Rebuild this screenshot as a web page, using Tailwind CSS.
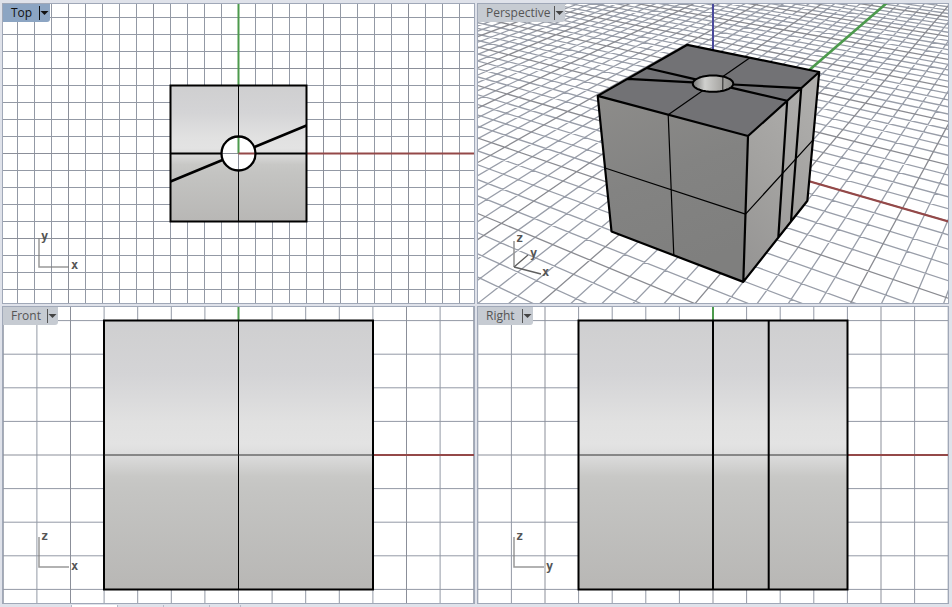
<!DOCTYPE html>
<html lang="en">
<head>
    <meta charset="UTF-8">
    <meta name="viewport" content="width=device-width, initial-scale=1.0">
    <title>Four View Layout</title>
    <script src="https://cdn.jsdelivr.net/npm/@tailwindcss/browser@4"></script>
</head>
<body class="h-screen flex flex-col overflow-hidden bg-[#dfe2ea] font-['Open_Sans',sans-serif]">
    <main class="flex-1 min-h-0 grid grid-cols-[473fr_472fr] grid-rows-[301fr_298fr] gap-[2px] pt-[3px] pl-[2px] pr-[3px]">

        <!-- Top -->
        <section class="relative overflow-hidden border border-[#a0a8b8] bg-white" aria-label="Top viewport">
            <svg class="block absolute inset-0 w-full h-full">
                <defs>
                    <linearGradient id="shade" x1="0" y1="0" x2="0" y2="1">
                        <stop offset="0" stop-color="#cfcfd0"/>
                        <stop offset="0.2" stop-color="#d4d4d6"/>
                        <stop offset="0.38" stop-color="#e1e1e1"/>
                        <stop offset="0.46" stop-color="#e3e3e3"/>
                        <stop offset="0.5" stop-color="#dcdcdc"/>
                        <stop offset="0.58" stop-color="#c8c8c6"/>
                        <stop offset="0.64" stop-color="#c4c4c2"/>
                        <stop offset="1" stop-color="#b8b7b5"/>
                    </linearGradient>
                </defs>
                <svg x="50%" y="50%" class="overflow-visible">
                    <g id="grid-top"></g>
                    <path d="M0 0V-600" stroke="#4c9a4c" stroke-width="2"/>
                    <path d="M0 0H900" stroke="#944848" stroke-width="2"/>
                    <path d="M-68-68H68V68H-68ZM17 0A17 17 0 1 0-17 0A17 17 0 1 0 17 0Z" fill="url(#shade)" fill-rule="evenodd"/>
                    <path d="M0-68V-17M0 17V68" stroke="#000"/>
                    <path d="M-68-68H68V68H-68ZM-68 0H-17M17 0H68" fill="none" stroke="#000" stroke-width="2"/>
                    <path d="M-68 28L-16 6.5M16-6.5L68-28" stroke="#000" stroke-width="2.5"/>
                    <circle r="17" fill="none" stroke="#000" stroke-width="2.3"/>
                </svg>
                <svg y="100%" class="overflow-visible font-['DejaVu_Sans_Mono',monospace] font-bold text-xs" fill="#555">
                    <path d="M36-65V-36H66" fill="none" stroke="#808080" stroke-opacity=".8" stroke-width="1.5"/>
                    <text x="38" y="-63">y</text>
                    <text x="68" y="-34">x</text>
                </svg>
            </svg>
            <div class="absolute top-0 left-0 flex h-[18px] rounded-br-[3px] bg-[#8ca5c3] text-xs leading-[18px] text-[#111]">
                <button class="w-9 pl-2 text-left">Top</button>
                <button class="w-[11px] flex items-center" aria-label="Top menu">
                    <svg width="11" height="18"><path d="M.5 2V16" stroke="#111"/><path d="M1.500 7H9.500L5.500 11Z" fill="#111"/></svg>
                </button>
            </div>
        </section>

        <!-- Perspective -->
        <section class="relative overflow-hidden border border-[#a0a8b8] bg-white" aria-label="Perspective viewport">
            <svg class="block absolute inset-0 w-full h-full">
                <defs>
                    <linearGradient id="wall" x1="0" y1="0" x2="1" y2="0">
                        <stop offset="0" stop-color="#777"/>
                        <stop offset="0.3" stop-color="#d0d0ce"/>
                        <stop offset="0.65" stop-color="#aeadaa"/>
                        <stop offset="1" stop-color="#8a8a88"/>
                    </linearGradient>
                    <linearGradient id="front-face" x1="0" y1="0" x2="0.3" y2="1">
                        <stop offset="0" stop-color="#8d8c8a"/>
                        <stop offset="0.5" stop-color="#838382"/>
                        <stop offset="1" stop-color="#7f7f7e"/>
                    </linearGradient>
                    <linearGradient id="right-face" x1="0.6" y1="0" x2="0.2" y2="1">
                        <stop offset="0" stop-color="#aeadab"/>
                        <stop offset="0.5" stop-color="#a3a2a0"/>
                        <stop offset="1" stop-color="#969594"/>
                    </linearGradient>
                </defs>
                <svg x="50%" y="50%" class="overflow-visible" id="scene"></svg>
                <svg y="100%" class="overflow-visible font-['DejaVu_Sans_Mono',monospace] font-bold text-xs" fill="#555">
                    <path d="M36-62V-36" stroke="#909090" stroke-width="1.5"/>
                    <path d="M36-36L50-48M36-36L63-29" stroke="#606060" stroke-width="1.3"/>
                    <text x="38" y="-61">z</text>
                    <text x="52" y="-46">y</text>
                    <text x="64" y="-27">x</text>
                </svg>
            </svg>
            <div class="absolute top-0 left-0 flex h-[18px] rounded-br-[3px] bg-[#c6cbd2] text-xs leading-[18px] text-[#555]">
                <button class="w-[76px] pl-2 text-left">Perspective</button>
                <button class="w-[11px] flex items-center" aria-label="Perspective menu">
                    <svg width="11" height="18"><path d="M.5 2V16" stroke="#555"/><path d="M1.500 7H9.500L5.500 11Z" fill="#444"/></svg>
                </button>
            </div>
        </section>

        <!-- Front -->
        <section class="relative overflow-hidden border border-[#a0a8b8] bg-white" aria-label="Front viewport">
            <svg class="block absolute inset-0 w-full h-full">
                <svg x="50%" y="50%" class="overflow-visible">
                    <g id="grid-front"></g>
                    <path d="M0 0V-600" stroke="#4c9a4c" stroke-width="2"/>
                    <path d="M0 0H900" stroke="#944848" stroke-width="2"/>
                    <rect x="-134.5" y="-134.5" width="269" height="269" fill="url(#shade)" stroke="#000" stroke-width="2"/>
                    <path d="M0-134V134" stroke="#000"/>
                    <path d="M-134 0H134" stroke="#333" stroke-width="1.2"/>
                </svg>
                <svg y="100%" class="overflow-visible font-['DejaVu_Sans_Mono',monospace] font-bold text-xs" fill="#555">
                    <path d="M36-66V-36H66" fill="none" stroke="#808080" stroke-opacity=".8" stroke-width="1.5"/>
                    <text x="38" y="-63">z</text>
                    <text x="68" y="-33">x</text>
                </svg>
            </svg>
            <div class="absolute top-0 left-0 flex h-[18px] rounded-br-[3px] bg-[#c6cbd2] text-xs leading-[18px] text-[#555]">
                <button class="w-11 pl-2 text-left">Front</button>
                <button class="w-[11px] flex items-center" aria-label="Front menu">
                    <svg width="11" height="18"><path d="M.5 2V16" stroke="#555"/><path d="M1.500 7H9.500L5.500 11Z" fill="#444"/></svg>
                </button>
            </div>
        </section>

        <!-- Right -->
        <section class="relative overflow-hidden border border-[#a0a8b8] bg-white" aria-label="Right viewport">
            <svg class="block absolute inset-0 w-full h-full">
                <svg x="50%" y="50%" class="overflow-visible">
                    <g id="grid-right"></g>
                    <path d="M0 0V-600" stroke="#4c9a4c" stroke-width="2"/>
                    <path d="M0 0H900" stroke="#944848" stroke-width="2"/>
                    <rect x="-134.5" y="-134.5" width="269" height="269" fill="url(#shade)" stroke="#000" stroke-width="2"/>
                    <path d="M-134 0H134" stroke="#333" stroke-width="1.2"/>
                    <path d="M0-134V134M55.700-134V134" stroke="#000" stroke-width="2"/>
                </svg>
                <svg y="100%" class="overflow-visible font-['DejaVu_Sans_Mono',monospace] font-bold text-xs" fill="#555">
                    <path d="M36-66V-36H66" fill="none" stroke="#808080" stroke-opacity=".8" stroke-width="1.5"/>
                    <text x="38" y="-63">z</text>
                    <text x="68" y="-33">y</text>
                </svg>
            </svg>
            <div class="absolute top-0 left-0 flex h-[18px] rounded-br-[3px] bg-[#c6cbd2] text-xs leading-[18px] text-[#555]">
                <button class="w-11 pl-2 text-left">Right</button>
                <button class="w-[11px] flex items-center" aria-label="Right menu">
                    <svg width="11" height="18"><path d="M.5 2V16" stroke="#555"/><path d="M1.500 7H9.500L5.500 11Z" fill="#444"/></svg>
                </button>
            </div>
        </section>
    </main>

    <!-- Upper edge of the viewport tabs -->
    <footer class="h-[3px] pt-px flex pl-[24px]">
        <div class="w-12 border-r border-[#b4bac8]"></div>
        <div class="w-[46px] border-r border-[#b4bac8] bg-white"></div>
        <div class="w-[46px] border-r border-[#b4bac8]"></div>
        <div class="w-[46px] border-r border-[#b4bac8]"></div>
        <div class="w-[31px] border-r border-[#b4bac8]"></div>
    </footer>

    <script>
        const GRID = '#9399a5';
        const MAJOR = '#8b8f99';

        // Flat grid for the parallel views
        function flatGrid(id, step) {
            let minor = '', major = '';
            for (let i = -60; i <= 60; i++) {
                const p = (i * step).toFixed(1);
                const d = `M${p}-1500V1500M-1500 ${p}H1500`;
                if (i % 5 === 0) major += d; else minor += d;
            }
            document.getElementById(id).innerHTML =
                `<path d="${minor}" stroke="${GRID}"/><path d="${major}" stroke="${MAJOR}"/>`;
        }
        flatGrid('grid-top', 17);
        flatGrid('grid-front', 33.6);
        flatGrid('grid-right', 33.6);

        // Camera looks at the origin from azimuth -60, elevation 30
        const FOCAL = 624, DIST = 32.85;
        const C = Math.cos(Math.PI / 6);
        const depth = ([x, y, z]) => DIST - (x * C / 2 - y * C * C + z / 2);
        function project(p) {
            const [x, y, z] = p;
            const s = FOCAL / depth(p);
            return [(s * (x * C + y / 2)).toFixed(1), (-s * (-x / 4 + y * C / 2 + z * C)).toFixed(1)];
        }
        const poly = pts => 'M' + pts.map(p => project(p).join(' ')).join('L');

        // Segment with the part behind the camera cut away
        function segment(a, b) {
            const near = 4, da = depth(a), db = depth(b);
            if (da < near && db < near) return '';
            const mix = t => a.map((v, i) => v + (b[i] - v) * t);
            const t = (near - da) / (db - da);
            if (da < near) a = mix(t);
            else if (db < near) b = mix(t);
            return poly([a, b]);
        }

        let minor = '', major = '';
        const N = 100;
        for (let i = -N; i <= N; i++) {
            const d = segment([i, -N, 0], [i, N, 0]) + segment([-N, i, 0], [N, i, 0]);
            if (i % 5 === 0) major += d; else minor += d;
        }

        const ring = z => Array.from({ length: 73 }, (_, i) => {
            const a = i * Math.PI / 36;
            return [Math.cos(a), Math.sin(a), z];
        });
        const T = 4 * Math.tan(Math.PI / 8);
        const hx = Math.cos(Math.PI / 8), hy = Math.sin(Math.PI / 8);
        const thick = [
            [[-4, -4, 4], [4, -4, 4], [4, 4, 4], [-4, 4, 4], [-4, -4, 4], [-4, -4, -4], [4, -4, -4], [4, 4, -4], [4, 4, 4]],
            [[4, -4, 4], [4, -4, -4]],
            [[4, 0, 4], [4, 0, -4]],
            [[4, T, 4], [4, T, -4]],
            [[1, 0, 4], [4, 0, 4]],
            [[hx, hy, 4], [4, T, 4]],
            [[-1, 0, 4], [-4, 0, 4]],
            [[-hx, -hy, 4], [-4, -T, 4]]
        ].map(poly).join('');
        const thin = [
            [[0, -1, 4], [0, -4, 4], [0, -4, -4]],
            [[0, 1, 4], [0, 4, 4]],
            [[-4, -4, 0], [4, -4, 0], [4, 4, 0]]
        ].map(poly).join('');

        document.getElementById('scene').innerHTML = `
            <g fill="none" stroke-linejoin="round">
                <path d="${minor}" stroke="#999ea9" stroke-width="1.3"/>
                <path d="${major}" stroke="#8a8b91" stroke-width="1.3"/>
                <path d="${poly([[0, 0, 0], [40, 0, 0]])}" stroke="#944848" stroke-width="2.2"/>
                <path d="${poly([[0, 0, 0], [0, 40, 0]])}" stroke="#4c9a4c" stroke-width="2.6"/>
                <path d="${poly([[0, 0, 0], [0, 0, 20]])}" stroke="#4a4a9c" stroke-width="2"/>
                <path d="${poly([[-4, -4, 4], [4, -4, 4], [4, 4, 4], [-4, 4, 4]])}" fill="#727275"/>
                <path d="${poly([[-4, -4, 4], [4, -4, 4], [4, -4, -4], [-4, -4, -4]])}" fill="url(#front-face)"/>
                <path d="${poly([[4, -4, 4], [4, 4, 4], [4, 4, -4], [4, -4, -4]])}" fill="url(#right-face)"/>
                <clipPath id="hole"><path d="${poly(ring(4))}"/></clipPath>
                <path d="${poly(ring(4))}" fill="url(#wall)"/>
                <path d="${poly([[0, 1, 4], [0, 1, -4]])}" stroke="#222" clip-path="url(#hole)"/>
                <path d="${thin}" stroke="#000" stroke-width="1.2"/>
                <path d="${thick}" stroke="#000" stroke-width="2.2"/>
                <path d="${poly(ring(4))}" stroke="#000" stroke-width="2"/>
            </g>`;
    </script>
</body>
</html>
